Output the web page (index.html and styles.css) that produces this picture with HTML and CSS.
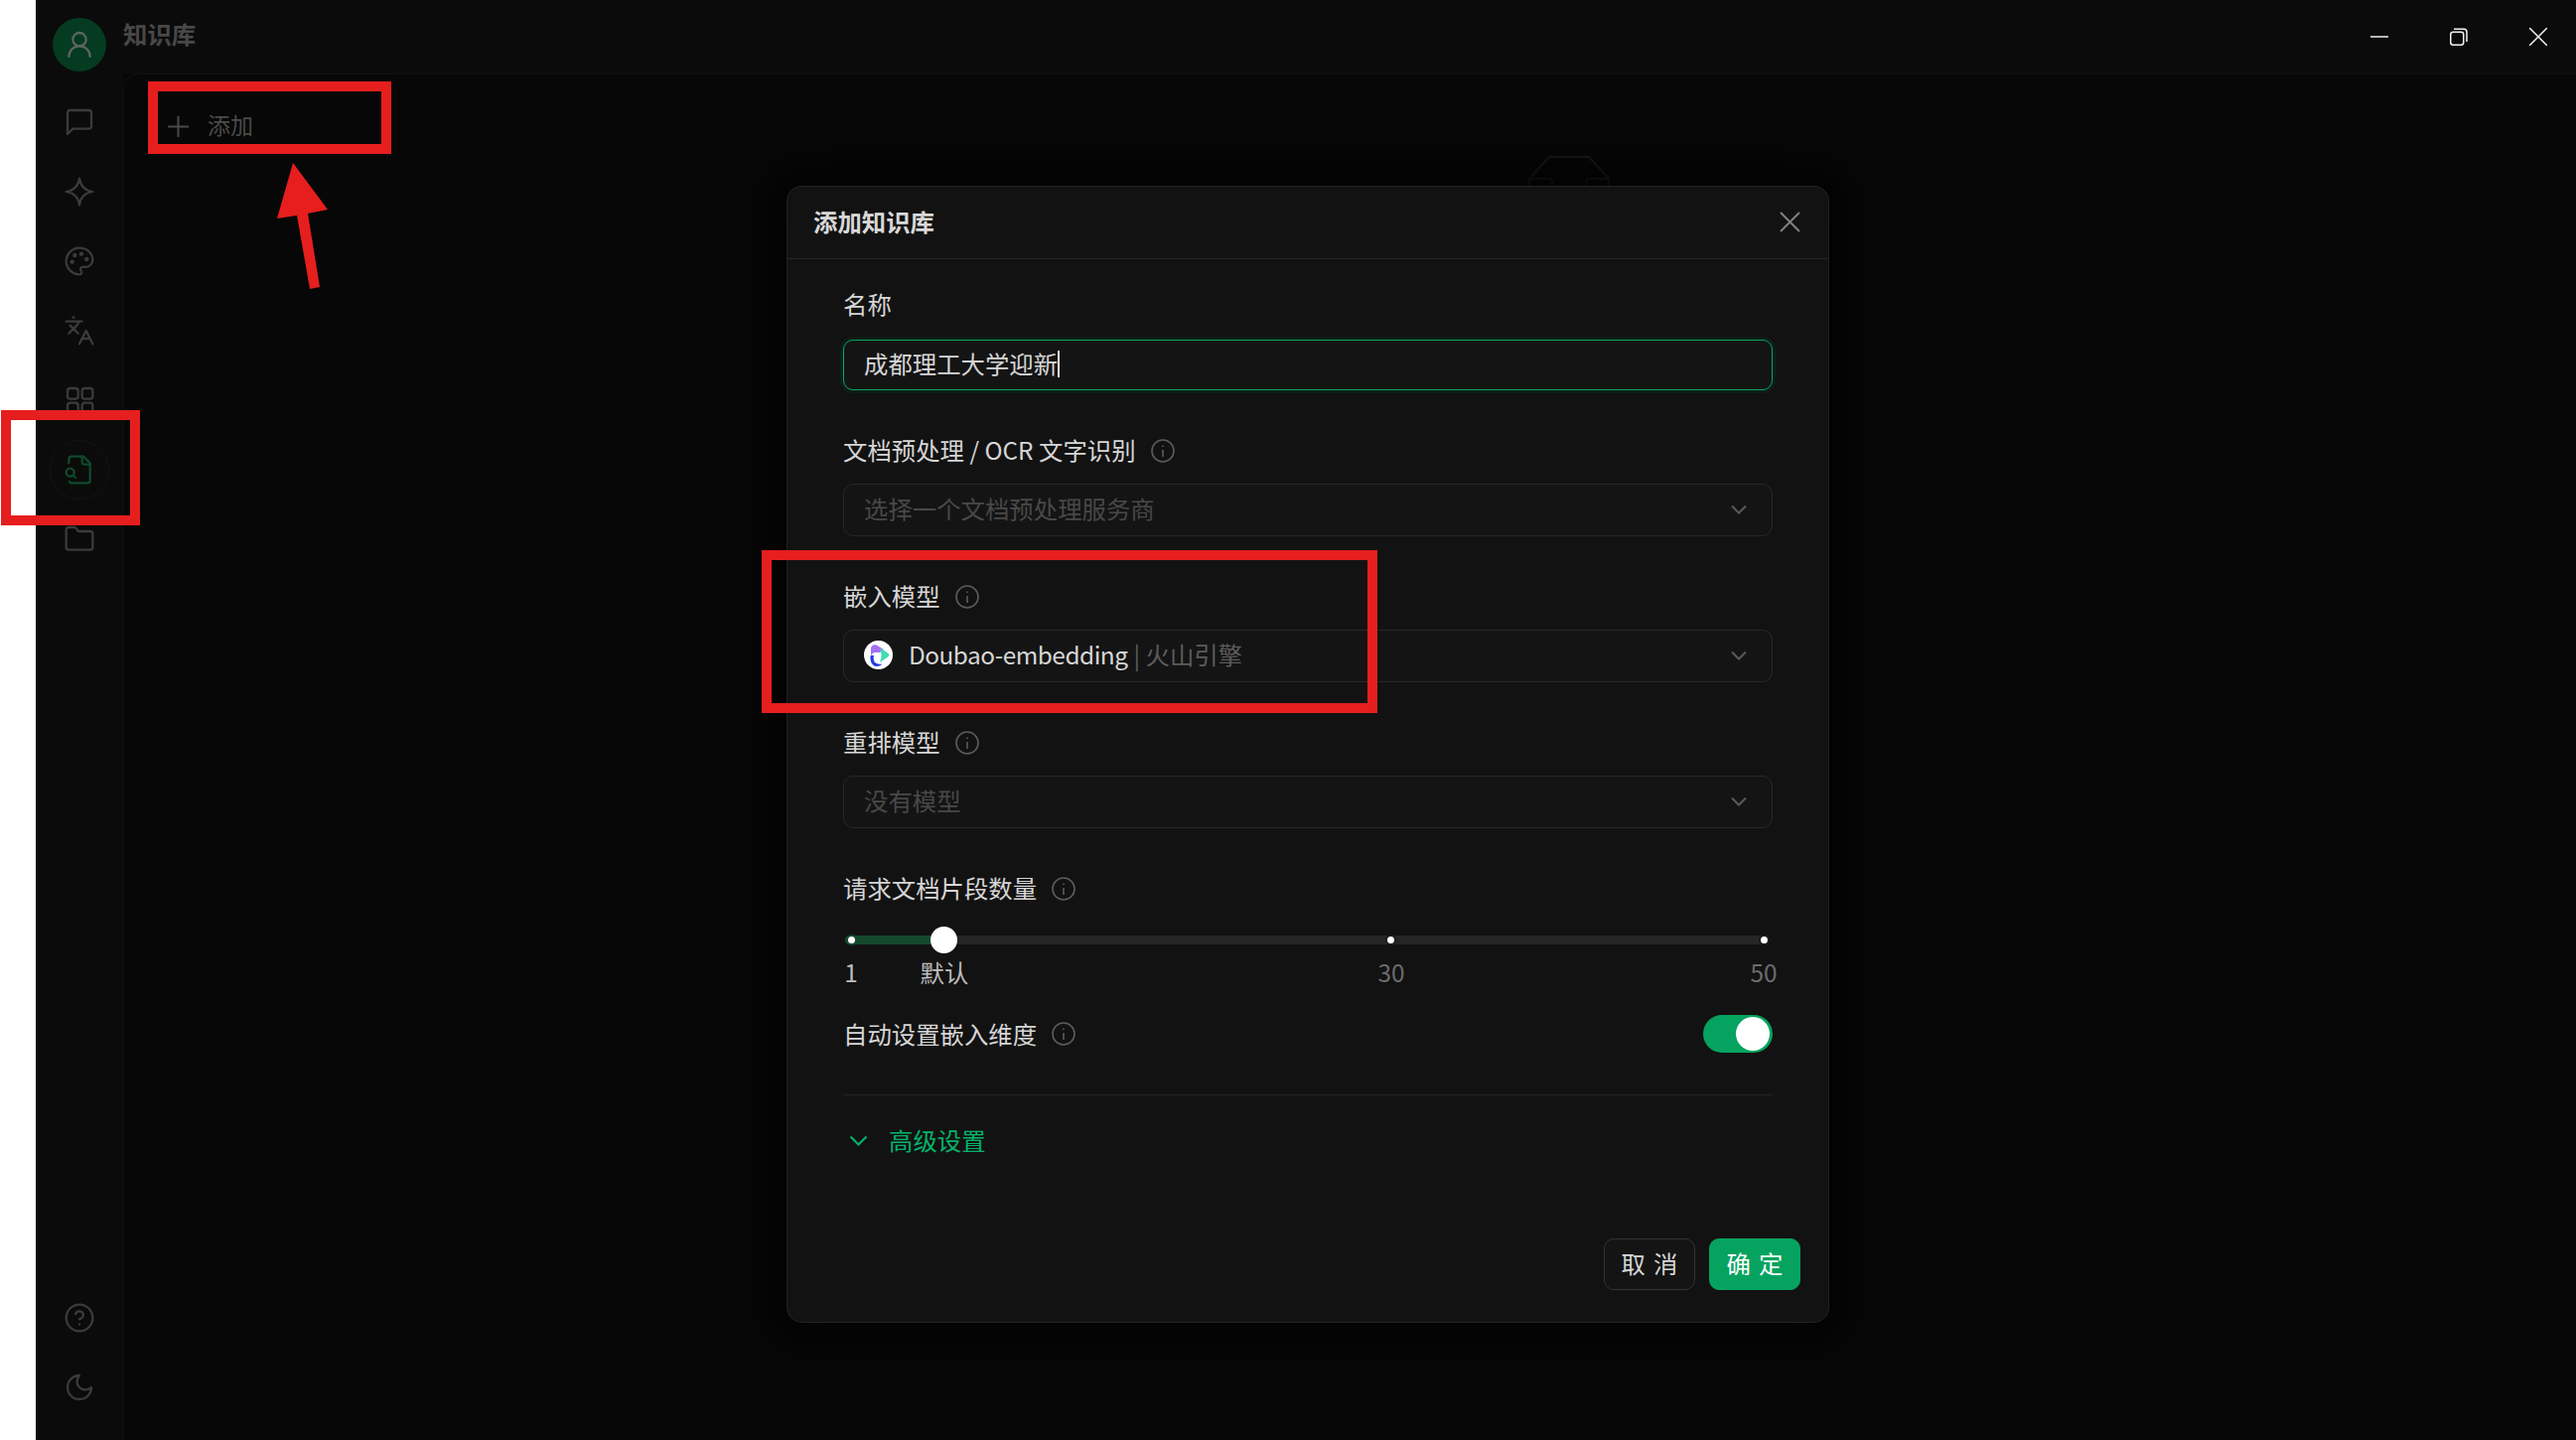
FILE: index.html
```html
<!DOCTYPE html>
<html lang="zh-CN">
<head>
    <meta charset="UTF-8">
    <title>知识库</title>
    <link rel="stylesheet" href="styles.css">
</head>
<body>
    <div class="page-strip"></div>

    <aside class="sidebar">
        <div class="avatar">
            <svg class="icon" viewBox="0 0 24 24"><circle cx="12" cy="8" r="5"/><path d="M20 21a8 8 0 0 0-16 0"/></svg>
        </div>
        <nav class="nav-group">
            <div class="nav-item"><svg class="icon" viewBox="0 0 24 24"><path d="M21 15a2 2 0 0 1-2 2H7l-4 4V5a2 2 0 0 1 2-2h14a2 2 0 0 1 2 2z"/></svg></div>
            <div class="nav-item"><svg class="icon" viewBox="0 0 24 24"><path d="M12 2c.9 6.100 3.900 9.100 10 10-6.100.9-9.100 3.900-10 10-.9-6.100-3.900-9.100-10-10 6.100-.9 9.100-3.900 10-10z"/></svg></div>
            <div class="nav-item"><svg class="icon" viewBox="0 0 24 24"><circle cx="13.500" cy="6.500" r=".8"/><circle cx="17.500" cy="10.500" r=".8"/><circle cx="8.500" cy="7.500" r=".8"/><circle cx="6.500" cy="12.500" r=".8"/><path d="M12 2C6.500 2 2 6.500 2 12s4.500 10 10 10c.926 0 1.648-.746 1.648-1.688 0-.437-.18-.835-.437-1.125-.29-.289-.438-.652-.438-1.125a1.640 1.640 0 0 1 1.668-1.668h1.996c3.051 0 5.555-2.503 5.555-5.554C21.965 6.012 17.461 2 12 2z"/></svg></div>
            <div class="nav-item"><svg class="icon" viewBox="0 0 24 24"><path d="m5 8 6 6"/><path d="m4 14 6-6 2-3"/><path d="M2 5h12"/><path d="M7 2h1"/><path d="m22 22-5-10-5 10"/><path d="M14 18h6"/></svg></div>
            <div class="nav-item"><svg class="icon" viewBox="0 0 24 24"><rect x="3" y="3" width="8" height="8" rx="2"/><rect x="14" y="3" width="8" height="8" rx="2"/><rect x="3" y="14" width="8" height="8" rx="2"/><rect x="14" y="14" width="8" height="8" rx="2"/></svg></div>
            <div class="nav-item nav-active"><svg class="icon" viewBox="0 0 24 24"><path d="M14 2v4a2 2 0 0 0 2 2h4"/><path d="M4.268 21a2 2 0 0 0 1.727 1H18a2 2 0 0 0 2-2V7l-5-5H6a2 2 0 0 0-2 2v3"/><path d="m9 18-1.500-1.500"/><circle cx="5" cy="14" r="3"/></svg></div>
            <div class="nav-item"><svg class="icon" viewBox="0 0 24 24"><path d="M20 20a2 2 0 0 0 2-2V8a2 2 0 0 0-2-2h-7.900a2 2 0 0 1-1.690-.9L9.600 3.900A2 2 0 0 0 7.930 3H4a2 2 0 0 0-2 2v13a2 2 0 0 0 2 2Z"/></svg></div>
        </nav>
        <div class="nav-group nav-bottom">
            <div class="nav-item"><svg class="icon" viewBox="0 0 24 24"><circle cx="12" cy="12" r="10"/><path d="M9.090 9a3 3 0 0 1 5.830 1c0 2-3 3-3 3"/><path d="M12 17h.01"/></svg></div>
            <div class="nav-item"><svg class="icon" viewBox="0 0 24 24"><path d="M12 3a6 6 0 0 0 9 9 9 9 0 1 1-9-9Z"/></svg></div>
        </div>
    </aside>

    <div class="content">
        <header class="titlebar">
            <div class="app-title">知识库</div>
            <div class="window-controls">
                <div class="window-btn"><svg width="18" height="18" viewBox="0 0 18 18"><path d="M0 9h18"/></svg></div>
                <div class="window-btn"><svg width="18" height="18" viewBox="0 0 18 18"><rect x=".75" y="4.250" width="13" height="13" rx="2.500"/><path d="M4 1.250h10a3 3 0 0 1 3 3V14"/></svg></div>
                <div class="window-btn"><svg width="18" height="18" viewBox="0 0 18 18"><path d="M0 0l18 18M18 0L0 18"/></svg></div>
            </div>
        </header>
        <main class="main-panel">
            <div class="add-row">
                <svg width="21" height="21" viewBox="0 0 21 21"><path d="M10.500 0v21M0 10.500h21"/></svg>
                <span>添加</span>
            </div>
        </main>
    </div>

    <!-- empty state picture, mostly hidden by the dialog -->
    <svg class="empty-icon" width="84" height="34" viewBox="0 0 84 34">
        <path d="M2 32V24L22 2h40l20 22v8"/>
        <path d="M2 24h20a3 3 0 0 1 3 3v5M82 24H62a3 3 0 0 0-3 3v5"/>
    </svg>

    <section class="modal">
        <div class="modal-header">
            <div class="modal-title">添加知识库</div>
            <svg class="modal-close" width="21" height="21" viewBox="0 0 21 21"><path d="M1 1l19 19M20 1L1 20"/></svg>
        </div>
        <div class="modal-body">
            <div class="form-item">
                <div class="form-label">名称</div>
                <div class="field field-focus"><span class="field-text">成都理工大学迎新</span><span class="caret"></span></div>
            </div>
            <div class="form-item">
                <div class="form-label">文档预处理 / OCR 文字识别
                    <svg class="info" viewBox="0 0 24 24"><circle cx="12" cy="12" r="11"/><path d="M12 11v7M12 6.500v1.500"/></svg>
                </div>
                <div class="field"><span class="field-text placeholder">选择一个文档预处理服务商</span>
                    <svg class="chevron" width="16" height="10" viewBox="0 0 16 10"><path d="M1 1.500l7 7 7-7"/></svg>
                </div>
            </div>
            <div class="form-item">
                <div class="form-label">嵌入模型
                    <svg class="info" viewBox="0 0 24 24"><circle cx="12" cy="12" r="11"/><path d="M12 11v7M12 6.500v1.500"/></svg>
                </div>
                <div class="field">
                    <svg class="model-logo" width="29" height="29" viewBox="0 0 29 29">
                        <circle cx="14.500" cy="14.500" r="14.500" fill="#fff"/>
                        <path d="M7 17V8c0-3 3-4.500 5.500-3.500L20 9l-4 3h-4c-3 0-5 2-5 5z" fill="#a570f3"/>
                        <path d="M16 7.500l8 5c1.500 1 1.500 3 0 4L16 22c2-5 2-10 0-14.500z" fill="#3edcb2"/>
                        <path d="M6.700 15c-1.200 6 1.800 11 6.300 11 2.500 0 4-1 5.500-2.500-4 1-7.500-.5-8.500-3.500-.5-1.500-.5-3.500 0-5z" fill="#1f3be6"/>
                        <ellipse cx="12.500" cy="17.500" rx="2.500" ry="5" fill="#fff"/>
                    </svg>
                    <span class="field-text model-name">Doubao-embedding</span>
                    <span class="field-text provider">| 火山引擎</span>
                    <svg class="chevron" width="16" height="10" viewBox="0 0 16 10"><path d="M1 1.500l7 7 7-7"/></svg>
                </div>
            </div>
            <div class="form-item">
                <div class="form-label">重排模型
                    <svg class="info" viewBox="0 0 24 24"><circle cx="12" cy="12" r="11"/><path d="M12 11v7M12 6.500v1.500"/></svg>
                </div>
                <div class="field"><span class="field-text placeholder">没有模型</span>
                    <svg class="chevron" width="16" height="10" viewBox="0 0 16 10"><path d="M1 1.500l7 7 7-7"/></svg>
                </div>
            </div>
            <div class="form-label">请求文档片段数量
                <svg class="info" viewBox="0 0 24 24"><circle cx="12" cy="12" r="11"/><path d="M12 11v7M12 6.500v1.500"/></svg>
            </div>
            <div class="slider">
                <div class="slider-rail">
                    <div class="slider-fill" style="width: 10.76%"></div>
                    <div class="slider-dot slider-dot-on" style="left: 0.65%"></div>
                    <div class="slider-dot" style="left: 59.2%"></div>
                    <div class="slider-dot" style="left: 99.57%"></div>
                    <div class="slider-handle" style="left: 10.76%"></div>
                </div>
                <div class="slider-marks">
                    <span class="slider-mark mark-on" style="left: 0.65%">1</span>
                    <span class="slider-mark mark-on" style="left: 10.76%">默认</span>
                    <span class="slider-mark" style="left: 59.2%">30</span>
                    <span class="slider-mark" style="left: 99.57%">50</span>
                </div>
            </div>
            <div class="switch-row">
                <div class="form-label">自动设置嵌入维度
                    <svg class="info" viewBox="0 0 24 24"><circle cx="12" cy="12" r="11"/><path d="M12 11v7M12 6.500v1.500"/></svg>
                </div>
                <div class="switch"><div class="switch-knob"></div></div>
            </div>
            <div class="divider"></div>
            <div class="advanced">
                <svg width="19" height="12" viewBox="0 0 19 12"><path d="M1.500 1.500l8 8 8-8"/></svg>
                <span>高级设置</span>
            </div>
        </div>
        <div class="modal-footer">
            <button class="btn">取消</button>
            <button class="btn btn-primary">确定</button>
        </div>
    </section>

    <!-- red marks drawn on top of the screenshot -->
    <div class="mark-box mark-add"></div>
    <div class="mark-box mark-nav"></div>
    <div class="mark-box mark-model"></div>
    <svg class="mark-arrows" width="400" height="300" viewBox="0 0 400 300">
        <polygon points="295,164 279,220 299,217 312,291 322,289 310,215 330,211"/>
        <polygon points="141,475 197,458 193,478 270,489 269,500 192,489 189,509"/>
    </svg>
</body>
</html>
```
FILE: styles.css
```css
* {
    box-sizing: border-box;
}
body {
    margin: 0;
    width: 2594px;
    height: 1450px;
    display: flex;
    overflow: hidden;
    position: relative;
    background-color: #070707;
    font-family: "Noto Sans CJK SC", "Noto Sans", sans-serif;
    font-size: 24.4px;
    color: #d6d6d6;
}
svg {
    display: block;
    fill: none;
}
.page-strip {
    width: 36px;
    background-color: #fff;
}
.sidebar {
    width: 88px;
    display: flex;
    flex-direction: column;
    align-items: center;
    padding: 18px 0 23px;
    background-color: #0b0b0b;
}
.avatar {
    width: 54px;
    height: 54px;
    margin-bottom: 21px;
    border-radius: 50%;
    background-color: #053b20;
    display: flex;
    align-items: center;
    justify-content: center;
}
.icon {
    width: 32px;
    height: 32px;
    stroke: #3b3b3b;
    stroke-width: 1.7;
    stroke-linecap: round;
    stroke-linejoin: round;
}
.avatar .icon {
    stroke: #5c6560;
}
.nav-group {
    display: flex;
    flex-direction: column;
    gap: 10px;
}
.nav-bottom {
    margin-top: auto;
}
.nav-item {
    width: 60px;
    height: 60px;
    border-radius: 50%;
    display: flex;
    align-items: center;
    justify-content: center;
}
.nav-active {
    border: 1px solid #141414;
}
.nav-active .icon {
    stroke: #0e4a2c;
}
.content {
    flex: 1;
    display: flex;
    flex-direction: column;
}
.titlebar {
    height: 74px;
    display: flex;
    justify-content: space-between;
    align-items: center;
    background-color: #0b0b0b;
}
.app-title {
    font-weight: 700;
    color: #484848;
    padding-bottom: 7px;
}
.window-controls {
    display: flex;
    gap: 4px;
}
.window-btn {
    width: 76px;
    height: 40px;
    display: flex;
    align-items: center;
    justify-content: center;
}
.window-btn svg {
    stroke: #f2f2f2;
    stroke-width: 1.5;
}
.main-panel {
    flex: 1;
    border-top: 1px solid #111;
    border-left: 1px solid #111;
    border-top-left-radius: 15px;
    background-color: #070707;
    padding: 35px 0 0 44px;
}
.add-row {
    display: flex;
    align-items: center;
    gap: 19px;
    height: 34px;
    color: #4a4a4a;
}
.add-row span {
    padding-bottom: 4px;
    font-size: 23px;
}
.add-row svg {
    stroke: #4a4a4a;
    stroke-width: 2;
}
.empty-icon {
    position: absolute;
    left: 1538px;
    top: 156px;
    stroke: #1a1a1a;
    stroke-width: 2;
}
.modal {
    position: absolute;
    left: 792px;
    top: 187px;
    width: 1050px;
    height: 1145px;
    display: flex;
    flex-direction: column;
    background-color: #121212;
    border: 1px solid #222;
    border-radius: 15px;
    box-shadow: 0 0 40px 20px rgba(0, 0, 0, 0.7);
}
.modal-header {
    height: 73px;
    flex-shrink: 0;
    display: flex;
    justify-content: space-between;
    align-items: center;
    padding: 0 28px 2px 26px;
    border-bottom: 1px solid #252525;
}
.modal-title {
    font-weight: 700;
    color: #d8d8d8;
    padding-bottom: 2px;
}
.modal-close {
    stroke: #808080;
    stroke-width: 2;
}
.modal-body {
    padding: 29px 56px 0 56px;
}
.form-item {
    margin-bottom: 44px;
}
.form-label {
    display: flex;
    align-items: center;
    gap: 15px;
    height: 33px;
    line-height: 33px;
    padding-bottom: 2px;
}
.form-item .form-label {
    margin-bottom: 17px;
}
.form-item:first-child .form-label {
    margin-bottom: 19px;
}
.info {
    width: 24px;
    height: 24px;
    margin-top: 2px;
    stroke: #5c5c5c;
    stroke-width: 1.6;
}
.field {
    height: 53px;
    display: flex;
    align-items: center;
    padding: 0 25px 2px 20px;
    border: 1px solid #282828;
    border-radius: 10px;
    background-color: #141414;
}
.field-focus {
    height: 51px;
    border: 1.5px solid #04a764;
    box-shadow: 0 0 0 3px rgba(4, 167, 100, 0.08);
}
.field-text {
    padding-bottom: 3px;
}
.model-name {
    letter-spacing: -0.5px;
}
.caret {
    width: 2px;
    height: 27px;
    background-color: #e8e8e8;
}
.placeholder {
    color: #484848;
}
.provider {
    margin-left: 6px;
    color: #5c5c5c;
}
.model-logo {
    margin-right: 16px;
}
.chevron {
    margin-left: auto;
    stroke: #5a5a5a;
    stroke-width: 2;
}
.slider {
    margin: 18px 5px 0 2px;
    padding-top: 13px;
}
.slider-rail {
    position: relative;
    height: 9px;
    border-radius: 5px;
    background-color: #252525;
}
.slider-fill {
    height: 100%;
    border-radius: 5px 0 0 5px;
    background-color: #15492f;
}
.slider-dot {
    position: absolute;
    top: -1px;
    width: 11px;
    height: 11px;
    margin-left: -5.5px;
    border-radius: 50%;
    border: 2px solid #1c1c1c;
    background-color: #fff;
}
.slider-dot-on {
    border-color: #15492f;
}
.slider-handle {
    position: absolute;
    top: -9px;
    width: 27px;
    height: 27px;
    margin-left: -13.5px;
    border-radius: 50%;
    background-color: #fff;
}
.slider-marks {
    position: relative;
    height: 34px;
    margin-top: 11px;
    line-height: 34px;
}
.slider-mark {
    position: absolute;
    transform: translateX(-50%);
    color: #6c6c6c;
}
.mark-on {
    color: #bdbdbd;
}
.switch-row {
    display: flex;
    justify-content: space-between;
    align-items: center;
    height: 38px;
    margin-top: 26px;
}
.switch {
    width: 70px;
    height: 38px;
    padding: 2px 3px;
    display: flex;
    justify-content: flex-end;
    border-radius: 19px;
    background-color: #05a35f;
}
.switch-knob {
    width: 34px;
    height: 34px;
    border-radius: 50%;
    background-color: #fff;
}
.divider {
    height: 1px;
    margin-top: 42px;
    background-color: #232323;
}
.advanced {
    display: flex;
    align-items: center;
    gap: 21px;
    height: 36px;
    margin-top: 28px;
    padding-left: 6px;
    color: #05b26a;
}
.advanced span {
    padding-bottom: 3px;
}
.advanced svg {
    stroke: #05b26a;
    stroke-width: 2.2;
}
.modal-footer {
    margin-top: auto;
    display: flex;
    justify-content: flex-end;
    gap: 14px;
    padding: 0 28px 32px 0;
}
.btn {
    width: 92px;
    height: 52px;
    border: 1px solid #333;
    border-radius: 10px;
    background-color: #141414;
    color: #d6d6d6;
    font: inherit;
    letter-spacing: 8px;
    text-indent: 8px;
    padding: 0 0 3px;
}
.btn-primary {
    border-color: #05a35f;
    background-color: #05a35f;
    color: #fff;
}
.mark-box {
    position: absolute;
    border: 10.500px solid #e61e1e;
}
.mark-add {
    left: 149px;
    top: 82px;
    width: 245px;
    height: 73px;
}
.mark-nav {
    left: 1px;
    top: 413px;
    width: 140px;
    height: 116px;
}
.mark-model {
    left: 767px;
    top: 554px;
    width: 620px;
    height: 164px;
}
.mark-arrows {
    position: absolute;
    left: 0;
    top: 0;
    fill: #e61e1e;
}
```
